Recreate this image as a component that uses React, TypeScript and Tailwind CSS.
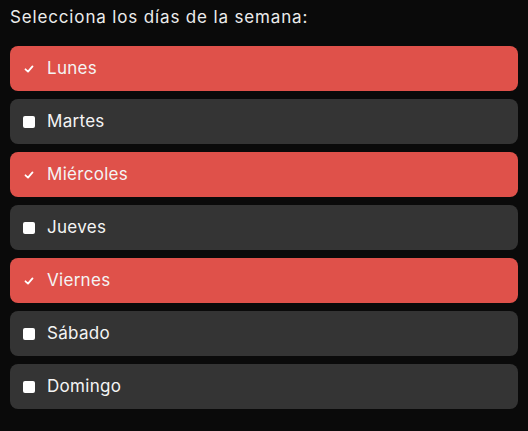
import React, { useState } from 'react';

const DAYS = ['Lunes', 'Martes', 'Miércoles', 'Jueves', 'Viernes', 'Sábado', 'Domingo'];

const CheckMark: React.FC = () => (
    <svg width="12" height="12" viewBox="0 0 12 12" className="block">
        <path d="M2.5 6.3 L5 8.6 L9.5 3.4" fill="none" stroke="#ffffff" strokeWidth="1.8" strokeLinecap="round" strokeLinejoin="round" />
    </svg>
);

export default function App() {
    const [selected, setSelected] = useState<string[]>(['Lunes', 'Miércoles', 'Viernes']);

    const toggle = (day: string) => {
        setSelected((prev) => (prev.includes(day) ? prev.filter((d) => d !== day) : [...prev, day]));
    };

    return (
        <div
            className="min-h-[431px] w-[528px] bg-[#0a0a0a] px-[10px] pt-[4px] text-white"
            style={{ fontFamily: 'Inter, "Noto Sans", sans-serif' }}
        >
            <p className="text-[17px] leading-[26px] tracking-[0.85px] text-[#ececec]">Selecciona los días de la semana:</p>
            <div className="mt-[16px] flex flex-col gap-[8px]">
                {DAYS.map((day) => {
                    const on = selected.includes(day);
                    return (
                        <button
                            key={day}
                            onClick={() => toggle(day)}
                            className={`flex h-[45px] w-full items-center gap-[12px] rounded-[8px] pl-[13px] text-left ${
                                on ? 'bg-[#df514a]' : 'bg-[#343434]'
                            }`}
                        >
                            <span className="flex h-[12px] w-[12px] items-center justify-center">
                                {on ? <CheckMark /> : <span className="block h-[12px] w-[12px] rounded-[2px] bg-white" />}
                            </span>
                            <span className="text-[17px] tracking-[0.3px] text-[#f4f4f4]">{day}</span>
                        </button>
                    );
                })}
            </div>
        </div>
    );
}
